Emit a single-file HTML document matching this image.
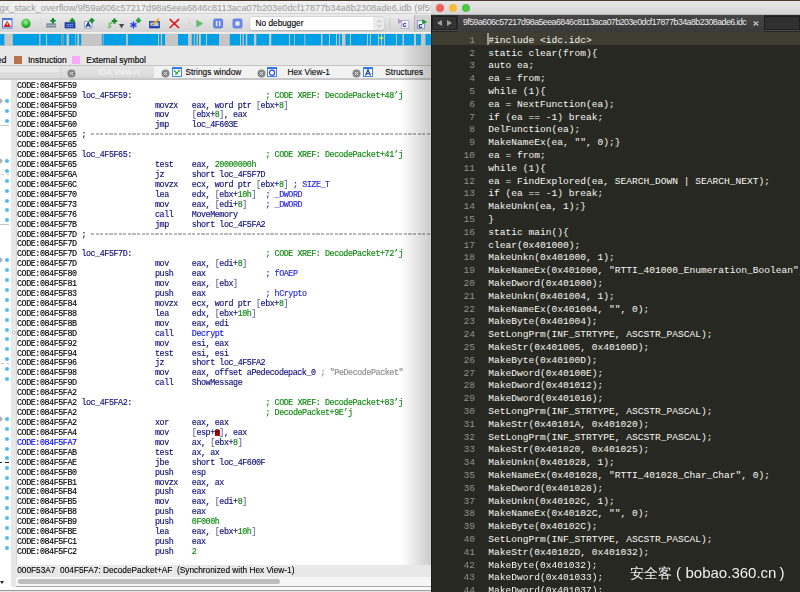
<!DOCTYPE html>
<html><head><meta charset="utf-8">
<style>
*{margin:0;padding:0;box-sizing:border-box}
html,body{width:800px;height:592px;overflow:hidden;background:#e8e8e8}
body{position:relative;font-family:"Liberation Sans",sans-serif}
#ida{position:absolute;left:0;top:0;width:431px;height:592px;background:#e9e9e9;overflow:hidden}
#ida .topline{position:absolute;left:0;top:0;width:431px;height:1px;background:#4a3d30}
#ida .title{position:absolute;left:0;top:1px;width:431px;height:13px;background:#efefef;border-bottom:1px solid #d2d2d2;overflow:hidden}
#ida .title span{position:absolute;left:-0.5px;top:1.2px;font-size:9.2px;color:#9a9a9a;white-space:pre;line-height:12px}
#ida .tb{position:absolute;left:0;top:14px;width:431px;height:18px;background:linear-gradient(#ebebeb,#d4d4d4)}
#ida .tbline{position:absolute;left:0;top:32px;width:431px;height:1px;background:#f2f2f2}
#ida .bandbg{position:absolute;left:0;top:33px;width:431px;height:13px;background:#e6e6e6}
#ida .band{position:absolute;left:0;top:34.3px;width:431px;height:11.3px;background:#c6c6c6;box-shadow:0 -0.6px 0 #f4e4dc,0 0.6px 0 #f4e4dc}
#ida .band i{position:absolute;top:0;height:11.5px}
#ida .legend{position:absolute;left:0;top:46px;width:431px;height:19px;background:#e8e8e8;font-size:8.4px;color:#000;-webkit-text-stroke:0.15px #000}
#ida .legend span{position:absolute;top:8.6px;white-space:pre;line-height:10px}
#ida .legend i{position:absolute;top:10.2px;width:8.2px;height:8.2px}
#ida .tabs{position:absolute;left:0;top:64.5px;width:431px;height:15px;background:#f2f2f2;border-top:1px solid #c4c4c4}
#ida .tabs .bot{position:absolute;left:0;top:12px;width:431px;height:2px;background:#c8c8c8}
#ida .tab{position:absolute;top:0;height:12px;font-size:8.3px;color:#000;white-space:pre;-webkit-text-stroke:0.1px #000}
#ida .tab span{position:absolute;top:1.6px;line-height:10px}
#ida .tab .x{position:absolute;top:3.3px;width:7px;height:7px;border-radius:50%;background:#8e8e8e}
#ida .tab .x:before,#ida .tab .x:after{content:"";position:absolute;left:1.5px;top:3px;width:4px;height:1px;background:#e6e6e6;transform:rotate(45deg)}
#ida .tab .x:after{transform:rotate(-45deg)}
#ida .tab .ic{position:absolute;top:1.5px;width:9.5px;height:10px;border:1px solid #3a7ae0;background:#f4f8ff}
#ida .tdiv{position:absolute;top:1px;width:1px;height:12px;background:#cfcfcf}
#ida .code{position:absolute;left:0;top:79.5px;width:431px;height:486px;background:#fff;overflow:hidden}
#ida .gstrip{position:absolute;left:11px;top:79.5px;width:5.5px;height:508px;background:#e7e7e7;border-right:1px solid #d6d6d6}
#ida .row{will-change:transform;position:absolute;left:0;width:431px;height:9.92px;font-family:"Liberation Mono",monospace;font-size:8.4px;letter-spacing:-0.44px;line-height:9.92px;white-space:pre;-webkit-text-stroke:0.15px currentColor}
#ida .row span{position:absolute;top:0}
#ida .row i{font-style:normal}
#ida .a{color:#000}
#ida .a.cur{color:#0000ff}
#ida .l{color:#10107a}
#ida .m,#ida .o{color:#10107a}
#ida .n{color:#0e880e}
#ida .b{color:#6a6aa8}
#ida .c{color:#0e880e}
#ida .k{color:#2a2ad8}
#ida .f{color:#1010e8}
#ida .dl.blk{background:linear-gradient(90deg,#222 0,#222 2px,transparent 2px,transparent 5px,#222 5px,#222 9px)}
#ida .s{color:#8a8a8a}
#ida .dsh{color:#202020}
#ida .dashline{position:absolute;top:2.3px;width:420px;height:1.3px;background:repeating-linear-gradient(90deg,#bababa 0,#bababa 3.2px,transparent 3.2px,transparent 4.6px)}
#ida .up{font-weight:normal;display:inline-block;width:4.6px;text-align:center}
#ida .cursor{color:#300000;font-style:normal}
#ida .curbox{position:absolute;width:4.8px;height:6.2px;background:#e40000}
#ida .dot{position:absolute;left:5px;width:4px;height:4px;border-radius:50%;background:#4cbcf8}
#ida .arr{position:absolute;left:0;width:0;height:0;border-top:3.5px solid transparent;border-bottom:3.5px solid transparent;border-left:3.5px solid #b0b0b0}
#ida .hl{position:absolute;left:0;width:9px;height:1.3px;background:#c4c4c4}
#ida .dl{position:absolute;left:0;width:9px;height:1.3px;background:linear-gradient(90deg,transparent 0,transparent 1px,#c4c4c4 1px,#c4c4c4 4.5px,transparent 4.5px,transparent 7.5px,#c4c4c4 7.5px,#c4c4c4 9px)}
#ida .shadow{position:absolute;left:401px;top:46px;width:30px;height:546px;background:linear-gradient(90deg,rgba(0,0,0,0),rgba(0,0,0,0.2))}
#ida .status{position:absolute;left:16px;top:565px;width:415px;height:11.5px;background:#e8e8e8;font-size:8.3px;color:#000;white-space:pre;-webkit-text-stroke:0.1px #000}
#ida .status span{position:absolute;left:1.2px;top:-0.2px;line-height:10px}
#ida .sbar{position:absolute;left:16px;top:576.5px;width:415px;height:9.5px;background:#f6f6f6}
#ida .thumb{position:absolute;left:2px;top:2.5px;width:262px;height:5px;border-radius:3px;background:#bdbdbd}
#ida .bl1{position:absolute;left:16px;top:586px;width:415px;height:1px;background:#a8a8a8}
#ida .bl2{position:absolute;left:0;top:587px;width:431px;height:2.5px;background:#fafafa}
#ida .bl3{position:absolute;left:0;top:589.5px;width:431px;height:1px;background:#9c9c9c}
#ida .bl4{position:absolute;left:0;top:590.5px;width:431px;height:2px;background:#e4e4e4}
#ida .gwhite{position:absolute;left:0;top:79.5px;width:11.5px;height:508px;background:#fff}
#ida .tri{position:absolute;left:0;top:581px;width:0;height:0;border-left:2.5px solid transparent;border-right:2.5px solid transparent;border-top:3px solid #222}
/* toolbar icons */
#ida .ico{position:absolute}
#ida .dd{position:absolute;left:250px;top:17px;width:133.5px;height:12.5px;background:linear-gradient(90deg,#fff 0,#fff 123.5px,#ebebeb 123.5px);border-radius:3px;box-shadow:0 0 0 0.5px #c8c8c8,0 0.5px 1px rgba(0,0,0,.2);font-size:8.3px;color:#000;-webkit-text-stroke:0.12px #000}
#ida .dd span{position:absolute;left:5.5px;top:1.2px;line-height:10px}
#ida .pressed{position:absolute;left:414px;top:14.5px;width:17px;height:17.5px;background:linear-gradient(#d6d6d6,#c8c8c8);border-left:1px solid #b4b4b4}
/* sublime */
#st{position:absolute;left:431px;top:0;width:369px;height:592px;background:#272822;overflow:hidden}
#st .topline{position:absolute;left:0;top:0;width:369px;height:1px;background:#4a3d30}
#st .title{position:absolute;left:0;top:1px;width:369px;height:14px;background:linear-gradient(#e6e6e6,#d6d6d6);border-bottom:0.5px solid #b8b8b8}
#st .light{position:absolute;top:2.6px;width:8px;height:8px;border-radius:50%}
#st .tabbar{position:absolute;left:0;top:15px;width:369px;height:17px;background:#2b2b2b;border-bottom:1px solid #262626}
#st .tabline{position:absolute;left:333px;top:29.5px;width:36px;height:1.2px;background:#4a4a4a}
#st .tabline2{position:absolute;left:0;top:29.5px;width:27px;height:1.2px;background:#4a4a4a}
#st .nav{position:absolute;left:0.5px;top:0.5px;width:25.5px;height:14px;background:#333333;border:0.5px solid #222}
#st .nav i{position:absolute;top:3.5px;width:0;height:0;border-top:3px solid transparent;border-bottom:3px solid transparent}
#st .tabx{position:absolute;left:27px;top:0;width:306px;height:17px;background:linear-gradient(#464646,#3a3a3a);border-bottom-right-radius:0;font-size:8.7px;letter-spacing:-0.47px;color:#eeeeee;white-space:pre}
#st .tabx span{position:absolute;left:4.9px;top:2.4px;line-height:10px}
#st .tabx b{position:absolute;left:295.3px;top:3.9px;font-weight:bold;font-size:8.6px;letter-spacing:0;color:#c4c4c4;line-height:10px}
#st .empty{position:absolute;left:333px;top:0.5px;width:36px;height:14px;background:#303030;border:0.5px solid #1e1e1e}
#st .hlrow{position:absolute;left:0;top:32.2px;width:369px;height:12.9px;background:#3e3d32}
#st .leftedge{position:absolute;left:0;top:15px;width:1px;height:592px;background:#1c1c18}
#st .ln{position:absolute;left:0;width:369px;height:12.82px;font-family:"Liberation Mono",monospace;font-size:9.59px;line-height:12.8px;white-space:pre}
#st .num{position:absolute;right:325px;color:#8f908a}
#st .tx{position:absolute;left:57.3px;color:#f8f8f2}
#st .caret{position:absolute;left:56.3px;top:33px;width:1.5px;height:11.5px;background:#9a9a90}
#wm{position:absolute;left:630px;top:563px;font-size:14px;color:#f4f4f4;white-space:pre;text-shadow:0 0 1px rgba(0,0,0,.6)}
#wm span{position:absolute;top:1px;line-height:18px}
</style></head><body>
<div id="ida">
 <div class="topline"></div>
 <div class="title"><span>gx_stack_overflow/9f59a606c57217d98a5eea6846c8113aca07b203e0dcf17877b34a8b2308ade6.idb (9f59a606c57217d98a5eea6846c8113aca07b203e0dcf17877b34a8b2308ade6)</span></div>
 <div class="tb"></div>
 <div class="tbline"></div>
 <div class="pressed"></div><div class="dd"><span>No debugger</span><i class="step"></i></div><svg class="ico" style="left:0;top:14px" width="431" height="18" viewBox="0 14 431 18">
 <!-- 1 window with red triangle -->
 <rect x="2.5" y="18.5" width="9.5" height="9.5" fill="#f4f8ff" stroke="#4a7ad8" stroke-width="1"/>
 <rect x="2.5" y="18.5" width="9.5" height="1.6" fill="#4a7ad8"/>
 <path d="M7.2 20.8 L11 27 L3.4 27 Z" fill="#e01818"/>
 <rect x="6.8" y="22.6" width="0.9" height="2.4" fill="#fff"/>
 <!-- 2 green circle -->
 <defs><radialGradient id="gc" cx="0.45" cy="0.35" r="0.65"><stop offset="0" stop-color="#a8f0a0"/><stop offset="0.55" stop-color="#3cc83c"/><stop offset="1" stop-color="#1a8a1a"/></radialGradient></defs>
 <circle cx="26" cy="23.4" r="4.6" fill="url(#gc)"/>
 <!-- separators -->
 <path d="M41 19 v1 M42 21 v1 M41 23 v1 M42 25 v1" stroke="#c8c8c8" stroke-width="1"/>
 <path d="M189 19 v1 M190 21 v1 M189 23 v1 M190 25 v1" stroke="#c8c8c8" stroke-width="1"/>
 <path d="M390 18 v12" stroke="#b4b4b4" stroke-width="1" stroke-dasharray="1 1"/>
 <!-- 4 data + plus -->
 <rect x="46" y="23" width="10.2" height="5" fill="#a8b8c0"/>
 <path d="M46.5 24.2 h9.2 M46.5 26.6 h9.2" stroke="#506878" stroke-width="1" stroke-dasharray="1.2 0.8"/>
 <path d="M53 18 v5.4 M50.3 20.7 h5.4" stroke="#168a2a" stroke-width="2"/>
 <!-- 5 101 box + plus -->
 <rect x="65" y="22.6" width="10" height="5.4" fill="#2646b8" stroke="#1a2a88" stroke-width="0.6"/>
 <path d="M66.5 24.6 h7 M66.5 26.4 h7" stroke="#a8c0ff" stroke-width="0.9" stroke-dasharray="1.1 0.6"/>
 <path d="M72.3 18 v5.4 M69.6 20.7 h5.4" stroke="#168a2a" stroke-width="2"/>
 <!-- 6 A box + plus -->
 <rect x="84.4" y="21.4" width="7.6" height="6.8" fill="#f4f6fa" stroke="#8898b8" stroke-width="0.8"/>
 <path d="M86 27.2 L88.2 22.8 L90.4 27.2 M86.9 25.6 h2.6" stroke="#1a3a88" stroke-width="1.4" fill="none"/>
 <path d="M91.8 18 v5.2 M89.2 20.6 h5.2" stroke="#168a2a" stroke-width="2"/>
 <!-- 7 green S arrow + plus + dropdown -->
 <path d="M112.5 23.3 C110.5 22.6 107.8 23.4 109.4 24.9 C111 26 111.8 26.8 108 27.4" fill="none" stroke="#5ab84a" stroke-width="1.5" stroke-dasharray="1.6 0.5"/>
 <path d="M114.5 18.3 v5.4 M111.8 21 h5.4" stroke="#1a8a2a" stroke-width="2"/>
 <path d="M119 24 h5.2 l-2.6 4.6 z" fill="#4a4a4a"/>
 <!-- 8 blue asterisk + plus -->
 <path d="M133.5 21.5 v7 M130.5 23.3 l6 3.4 M130.5 26.7 l6 -3.4" stroke="#2a3ae8" stroke-width="1.4"/>
 <path d="M138.5 17.8 v5.2 M135.9 20.4 h5.2" stroke="#1f9a3a" stroke-width="2"/>
 <!-- 9 edit -->
 <rect x="149.5" y="21.5" width="10" height="6.5" fill="#2a4ab8" stroke="#1a2a80" stroke-width="0.6"/>
 <rect x="150.5" y="22.5" width="8" height="3.5" fill="#b8c8f0"/>
 <path d="M152.5 25 L159 18.5" stroke="#f0b020" stroke-width="1.8"/>
 <path d="M152 25.6 L153.2 24.3" stroke="#303030" stroke-width="1"/>
 <!-- 10 red X -->
 <path d="M169.6 19.2 L179 28 M179 19.2 L169.6 28" stroke="#e01a1a" stroke-width="1.7"/>
 <!-- 12 play -->
 <path d="M196.3 19.8 L203.3 23.6 L196.3 27.4 Z" fill="#5cbf6c"/>
 <!-- 13 pause -->
 <rect x="213.6" y="19" width="9" height="9" rx="1.6" fill="#6b8ef0" stroke="#3c5cc8" stroke-width="0.6"/>
 <path d="M216.6 21 v5 M219.6 21 v5" stroke="#eef" stroke-width="1.2"/>
 <!-- 14 stop -->
 <rect x="233" y="19" width="9" height="9" rx="1.6" fill="#6b8ef0" stroke="#3c5cc8" stroke-width="0.6"/>
 <rect x="235.5" y="21.5" width="4" height="4" fill="#eef"/>
 <!-- 17 C icon -->
 <rect x="401.3" y="20.6" width="7.6" height="8" fill="#f0f4ff" stroke="#98a8d0" stroke-width="0.8"/>
 <text x="402.4" y="27.4" font-family="Liberation Sans" font-size="7.2" fill="#2a2a8a" font-weight="bold">c</text>
 <path d="M398 18.6 L402.5 21.3 L398 24 Z" fill="#b88cc8" opacity="0.9"/>
 <!-- 18 pressed C + play -->
 <rect x="417.3" y="20.8" width="7.2" height="7.6" fill="#f4f6ff" stroke="#6a88c8" stroke-width="0.8"/>
 <text x="418.2" y="27.6" font-family="Liberation Sans" font-size="7.6" fill="#0a0a60" font-weight="bold">c</text>
 <path d="M422.2 19.3 L427.2 21.9 L422.2 24.6 Z" fill="#1aa02a"/>
 <!-- stepper -->
 <path d="M377.2 22.4 L379.2 20.4 L381.2 22.4 M377.2 24.8 L379.2 26.8 L381.2 24.8" fill="none" stroke="#a8a8a8" stroke-width="0.9"/>
</svg>

 <div class="bandbg"></div>
 <div class="band"><svg style="position:absolute;left:0;top:0" width="431" height="11.3" viewBox="0 0 431 11.3"><rect x="0" y="0" width="431" height="11.3" fill="#c6c6c6"/><rect x="0.00" y="0" width="4.30" height="11.3" fill="#00a0e6"/><rect x="12.80" y="0" width="26.40" height="11.3" fill="#00a0e6"/><rect x="40.40" y="0" width="5.60" height="11.3" fill="#00a0e6"/><rect x="47.00" y="0" width="14.00" height="11.3" fill="#00a0e6"/><rect x="63.50" y="0" width="3.00" height="11.3" fill="#00a0e6"/><rect x="69.00" y="0" width="6.30" height="11.3" fill="#00a0e6"/><rect x="75.90" y="0" width="1.40" height="11.3" fill="#00a0e6"/><rect x="79.00" y="0" width="2.20" height="11.3" fill="#00a0e6"/><rect x="101.80" y="0" width="1.00" height="11.3" fill="#00a0e6"/><rect x="103.50" y="0" width="22.50" height="11.3" fill="#00a0e6"/><rect x="127.80" y="0" width="30.20" height="11.3" fill="#00a0e6"/><rect x="159.00" y="0" width="1.80" height="11.3" fill="#00a0e6"/><rect x="162.00" y="0" width="3.00" height="11.3" fill="#00a0e6"/><rect x="178.00" y="0" width="10.00" height="11.3" fill="#00a0e6"/><rect x="191.80" y="0" width="2.00" height="11.3" fill="#00a0e6"/><rect x="194.80" y="0" width="1.70" height="11.3" fill="#00a0e6"/><rect x="197.80" y="0" width="1.20" height="11.3" fill="#00a0e6"/><rect x="200.60" y="0" width="5.40" height="11.3" fill="#00a0e6"/><rect x="207.00" y="0" width="12.00" height="11.3" fill="#00a0e6"/><rect x="229.80" y="0" width="10.20" height="11.3" fill="#00a0e6"/><rect x="241.00" y="0" width="1.50" height="11.3" fill="#00a0e6"/><rect x="243.80" y="0" width="2.00" height="11.3" fill="#00a0e6"/><rect x="247.30" y="0" width="6.70" height="11.3" fill="#00a0e6"/><rect x="256.30" y="0" width="12.70" height="11.3" fill="#00a0e6"/><rect x="271.30" y="0" width="17.70" height="11.3" fill="#00a0e6"/><rect x="290.00" y="0" width="4.00" height="11.3" fill="#00a0e6"/><rect x="294.80" y="0" width="9.70" height="11.3" fill="#00a0e6"/><rect x="305.40" y="0" width="15.60" height="11.3" fill="#00a0e6"/><rect x="322.50" y="0" width="6.50" height="11.3" fill="#00a0e6"/><rect x="330.00" y="0" width="6.00" height="11.3" fill="#00a0e6"/><rect x="337.00" y="0" width="2.00" height="11.3" fill="#00a0e6"/><rect x="340.00" y="0" width="2.00" height="11.3" fill="#00a0e6"/><rect x="345.50" y="0" width="4.50" height="11.3" fill="#00a0e6"/><rect x="351.00" y="0" width="16.00" height="11.3" fill="#00a0e6"/><rect x="368.00" y="0" width="2.00" height="11.3" fill="#00a0e6"/><rect x="371.00" y="0" width="7.00" height="11.3" fill="#00a0e6"/><rect x="379.00" y="0" width="2.00" height="11.3" fill="#00a0e6"/><rect x="382.00" y="0" width="2.00" height="11.3" fill="#00a0e6"/><rect x="385.00" y="0" width="11.00" height="11.3" fill="#00a0e6"/><rect x="397.00" y="0" width="5.50" height="11.3" fill="#00a0e6"/><rect x="404.00" y="0" width="10.00" height="11.3" fill="#00a0e6"/><rect x="416.00" y="0" width="5.00" height="11.3" fill="#00a0e6"/><rect x="425.50" y="0" width="5.50" height="11.3" fill="#00a0e6"/><rect x="61.3" y="0" width="2" height="11.3" fill="#3aa0b0"/><rect x="199.2" y="0" width="1.3" height="11.3" fill="#e0c890"/><path d="M381.5 1 L382.3 3.2 L384.3 4 L382.3 4.8 L381.5 7 L380.7 4.8 L378.7 4 L380.7 3.2 Z" fill="#f0f040"/></svg></div>
 <div class="legend"><span style="left:-3px">ed</span><i style="left:13.6px;top:10px;background:#b7744e"></i><span style="left:28px">Instruction</span><i style="left:71.6px;top:10px;background:#f8a8f8"></i><span style="left:86.3px">External symbol</span></div>
 <div class="tabs">
  <div class="bot"></div>
  <div class="tab" style="left:0;width:60px;background:linear-gradient(#e8e8e8 0,#e8e8e8 50%,#dcdcdc 50%,#dcdcdc 100%)"></div>
  <div class="tab" style="left:60px;width:94px;background:linear-gradient(#e6e6e6,#d8d8d8);border-top-left-radius:3px;border-left:1px solid #d0d0d0"><svg class="ico" style="left:6.00px;top:3px" width="9" height="9" viewBox="0 0 9 9"><circle cx="4.5" cy="4.5" r="4" fill="#858585"/><path d="M2.9 2.9 L6.1 6.1 M6.1 2.9 L2.9 6.1" stroke="#e8e8e8" stroke-width="1"/></svg><span style="left:37px;color:#f6f6f6;-webkit-text-stroke:0">IDA View-A</span></div>
  <div class="tab" style="left:154px;width:95px;background:#f2f2f2"><svg class="ico" style="left:7.25px;top:3px" width="9" height="9" viewBox="0 0 9 9"><circle cx="4.5" cy="4.5" r="4" fill="#858585"/><path d="M2.9 2.9 L6.1 6.1 M6.1 2.9 L2.9 6.1" stroke="#e8e8e8" stroke-width="1"/></svg><svg class="ico" style="left:18.00px;top:1.5px" width="10" height="10" viewBox="0 0 10 10"><rect x="0.5" y="0.5" width="9" height="9" fill="#fbfdff" stroke="#3f86ee" stroke-width="1"/><rect x="0.5" y="0.5" width="9" height="1.6" fill="#2f74e6"/><path d="M2 3.5 L4.5 6 L7.5 4 M3 7.5 L6 6.5 M6.5 3 L7.8 4.5" stroke="#3aa83a" stroke-width="1.3" fill="none"/></svg><span style="left:31.5px">Strings window</span></div>
  <i class="tdiv" style="left:249.5px"></i>
  <div class="tab" style="left:250px;width:95px;background:#f2f2f2"><svg class="ico" style="left:6.50px;top:3px" width="9" height="9" viewBox="0 0 9 9"><circle cx="4.5" cy="4.5" r="4" fill="#858585"/><path d="M2.9 2.9 L6.1 6.1 M6.1 2.9 L2.9 6.1" stroke="#e8e8e8" stroke-width="1"/></svg><svg class="ico" style="left:17.25px;top:1.5px" width="10" height="10" viewBox="0 0 10 10"><rect x="0.5" y="0.5" width="9" height="9" fill="#fbfdff" stroke="#3f86ee" stroke-width="1"/><rect x="0.5" y="0.5" width="9" height="1.6" fill="#2f74e6"/><circle cx="5" cy="5.8" r="2.6" fill="none" stroke="#3a3aee" stroke-width="1.2"/></svg><span style="left:37.5px">Hex View-1</span></div>
  <i class="tdiv" style="left:344.8px"></i>
  <div class="tab" style="left:345px;width:86px;background:#f2f2f2"><svg class="ico" style="left:7.00px;top:3px" width="9" height="9" viewBox="0 0 9 9"><circle cx="4.5" cy="4.5" r="4" fill="#858585"/><path d="M2.9 2.9 L6.1 6.1 M6.1 2.9 L2.9 6.1" stroke="#e8e8e8" stroke-width="1"/></svg><svg class="ico" style="left:18.00px;top:1.5px" width="10" height="10" viewBox="0 0 10 10"><rect x="0.5" y="0.5" width="9" height="9" fill="#fbfdff" stroke="#3f86ee" stroke-width="1"/><rect x="0.5" y="0.5" width="9" height="1.6" fill="#2f74e6"/><path d="M2.5 8.6 L5 2.6 L7.5 8.6 M3.5 6.6 h3" stroke="#2a4a8a" stroke-width="1.3" fill="none"/></svg><span style="left:40.3px">Structures</span></div>
 </div>
 <div class="code">
 </div>
 <div class="gwhite"></div>
 <div class="gstrip"></div>
 <i class="dot" style="top:99.34px"></i><i class="dot" style="top:109.26px"></i><i class="dot" style="top:119.18px"></i><i class="dot" style="top:158.86px"></i><i class="dot" style="top:168.78px"></i><i class="dot" style="top:178.70px"></i><i class="dot" style="top:188.62px"></i><i class="dot" style="top:198.54px"></i><i class="dot" style="top:208.46px"></i><i class="dot" style="top:218.38px"></i><i class="dot" style="top:258.06px"></i><i class="dot" style="top:267.98px"></i><i class="dot" style="top:277.90px"></i><i class="dot" style="top:287.82px"></i><i class="dot" style="top:297.74px"></i><i class="dot" style="top:307.66px"></i><i class="dot" style="top:317.58px"></i><i class="dot" style="top:327.50px"></i><i class="dot" style="top:337.42px"></i><i class="dot" style="top:347.34px"></i><i class="dot" style="top:357.26px"></i><i class="dot" style="top:367.18px"></i><i class="dot" style="top:377.10px"></i><i class="dot" style="top:416.78px"></i><i class="dot" style="top:426.70px"></i><i class="dot" style="top:436.62px"></i><i class="dot" style="top:446.54px"></i><i class="dot" style="top:456.46px"></i><i class="dot" style="top:466.38px"></i><i class="dot" style="top:476.30px"></i><i class="dot" style="top:486.22px"></i><i class="dot" style="top:496.14px"></i><i class="dot" style="top:506.06px"></i><i class="dot" style="top:515.98px"></i><i class="dot" style="top:525.90px"></i><i class="dot" style="top:535.82px"></i><i class="dot" style="top:545.74px"></i><i class="arr" style="top:98.24px"></i><i class="arr" style="top:157.76px"></i><i class="arr" style="top:256.96px"></i><i class="arr" style="top:415.68px"></i><i class="hl" style="top:124.98px"></i><i class="hl" style="top:224.18px"></i><i class="dl" style="top:174.08px"></i><i class="dl" style="top:362.56px"></i><i class="dl blk" style="top:461.76px"></i>
 <svg class="ico" style="left:11px;top:329px" width="5" height="7" viewBox="0 0 5 7"><rect x="0" y="0.3" width="5" height="6" fill="#fafafa"/><circle cx="2.8" cy="3.5" r="1.7" fill="none" stroke="#b4b4b4" stroke-width="1"/></svg>
 <div class="row" style="top:81.70px"><span class="a" style="left:17.00px">CODE:084F5F59</span></div>
<div class="row" style="top:91.62px"><span class="a" style="left:17.00px">CODE:084F5F59</span><span class="l" style="left:81.40px">loc_4F5F59:</span><span class="c" style="left:265.40px">; CODE XREF: DecodePacket+48<b class="up">&#8217;</b>j</span></div>
<div class="row" style="top:101.54px"><span class="a" style="left:17.00px">CODE:084F5F59</span><span class="m" style="left:155.00px">movzx</span><span class="o" style="left:191.80px"><i class="o">eax, word ptr </i><i class="b">[</i><i class="o">ebx+</i><i class="n">8</i><i class="b">]</i></span></div>
<div class="row" style="top:111.46px"><span class="a" style="left:17.00px">CODE:084F5F5D</span><span class="m" style="left:155.00px">mov</span><span class="o" style="left:191.80px"><i class="b">[</i><i class="o">ebx+</i><i class="n">8</i><i class="b">]</i><i class="o">, eax</i></span></div>
<div class="row" style="top:121.38px"><span class="a" style="left:17.00px">CODE:084F5F60</span><span class="m" style="left:155.00px">jmp</span><span class="o" style="left:191.80px"><i class="o">loc_4F603E</i></span></div>
<div class="row" style="top:131.30px"><span class="a" style="left:17.00px">CODE:084F5F65</span><span class="dsh" style="left:81.40px">;</span><i class="dashline" style="left:91.20px"></i></div>
<div class="row" style="top:141.22px"><span class="a" style="left:17.00px">CODE:084F5F65</span></div>
<div class="row" style="top:151.14px"><span class="a" style="left:17.00px">CODE:084F5F65</span><span class="l" style="left:81.40px">loc_4F5F65:</span><span class="c" style="left:265.40px">; CODE XREF: DecodePacket+41<b class="up">&#8217;</b>j</span></div>
<div class="row" style="top:161.06px"><span class="a" style="left:17.00px">CODE:084F5F65</span><span class="m" style="left:155.00px">test</span><span class="o" style="left:191.80px"><i class="o">eax, </i><i class="n">20000000h</i></span></div>
<div class="row" style="top:170.98px"><span class="a" style="left:17.00px">CODE:084F5F6A</span><span class="m" style="left:155.00px">jz</span><span class="o" style="left:191.80px"><i class="o">short loc_4F5F7D</i></span></div>
<div class="row" style="top:180.90px"><span class="a" style="left:17.00px">CODE:084F5F6C</span><span class="m" style="left:155.00px">movzx</span><span class="o" style="left:191.80px"><i class="o">ecx, word ptr </i><i class="b">[</i><i class="o">ebx+</i><i class="n">8</i><i class="b">]</i></span><span class="k" style="left:288.40px"> ; SIZE_T</span></div>
<div class="row" style="top:190.82px"><span class="a" style="left:17.00px">CODE:084F5F70</span><span class="m" style="left:155.00px">lea</span><span class="o" style="left:191.80px"><i class="o">edx, </i><i class="b">[</i><i class="o">ebx+</i><i class="n">10h</i><i class="b">]</i></span><span class="k" style="left:265.40px">; _DWORD</span></div>
<div class="row" style="top:200.74px"><span class="a" style="left:17.00px">CODE:084F5F73</span><span class="m" style="left:155.00px">mov</span><span class="o" style="left:191.80px"><i class="o">eax, </i><i class="b">[</i><i class="o">edi+</i><i class="n">8</i><i class="b">]</i></span><span class="k" style="left:265.40px">; _DWORD</span></div>
<div class="row" style="top:210.66px"><span class="a" style="left:17.00px">CODE:084F5F76</span><span class="m" style="left:155.00px">call</span><span class="o" style="left:191.80px"><i class="o">MoveMemory</i></span></div>
<div class="row" style="top:220.58px"><span class="a" style="left:17.00px">CODE:084F5F7B</span><span class="m" style="left:155.00px">jmp</span><span class="o" style="left:191.80px"><i class="o">short loc_4F5FA2</i></span></div>
<div class="row" style="top:230.50px"><span class="a" style="left:17.00px">CODE:084F5F7D</span><span class="dsh" style="left:81.40px">;</span><i class="dashline" style="left:91.20px"></i></div>
<div class="row" style="top:240.42px"><span class="a" style="left:17.00px">CODE:084F5F7D</span></div>
<div class="row" style="top:250.34px"><span class="a" style="left:17.00px">CODE:084F5F7D</span><span class="l" style="left:81.40px">loc_4F5F7D:</span><span class="c" style="left:265.40px">; CODE XREF: DecodePacket+72<b class="up">&#8217;</b>j</span></div>
<div class="row" style="top:260.26px"><span class="a" style="left:17.00px">CODE:084F5F7D</span><span class="m" style="left:155.00px">mov</span><span class="o" style="left:191.80px"><i class="o">eax, </i><i class="b">[</i><i class="o">edi+</i><i class="n">8</i><i class="b">]</i></span></div>
<div class="row" style="top:270.18px"><span class="a" style="left:17.00px">CODE:084F5F80</span><span class="m" style="left:155.00px">push</span><span class="o" style="left:191.80px"><i class="o">eax</i></span><span class="k" style="left:265.40px">; fOAEP</span></div>
<div class="row" style="top:280.10px"><span class="a" style="left:17.00px">CODE:084F5F81</span><span class="m" style="left:155.00px">mov</span><span class="o" style="left:191.80px"><i class="o">eax, </i><i class="b">[</i><i class="o">ebx</i><i class="b">]</i></span></div>
<div class="row" style="top:290.02px"><span class="a" style="left:17.00px">CODE:084F5F83</span><span class="m" style="left:155.00px">push</span><span class="o" style="left:191.80px"><i class="o">eax</i></span><span class="k" style="left:265.40px">; hCrypto</span></div>
<div class="row" style="top:299.94px"><span class="a" style="left:17.00px">CODE:084F5F84</span><span class="m" style="left:155.00px">movzx</span><span class="o" style="left:191.80px"><i class="o">ecx, word ptr </i><i class="b">[</i><i class="o">ebx+</i><i class="n">8</i><i class="b">]</i></span></div>
<div class="row" style="top:309.86px"><span class="a" style="left:17.00px">CODE:084F5F88</span><span class="m" style="left:155.00px">lea</span><span class="o" style="left:191.80px"><i class="o">edx, </i><i class="b">[</i><i class="o">ebx+</i><i class="n">10h</i><i class="b">]</i></span></div>
<div class="row" style="top:319.78px"><span class="a" style="left:17.00px">CODE:084F5F8B</span><span class="m" style="left:155.00px">mov</span><span class="o" style="left:191.80px"><i class="o">eax, edi</i></span></div>
<div class="row" style="top:329.70px"><span class="a" style="left:17.00px">CODE:084F5F8D</span><span class="m" style="left:155.00px">call</span><span class="o" style="left:191.80px"><i class="f">Decrypt</i></span></div>
<div class="row" style="top:339.62px"><span class="a" style="left:17.00px">CODE:084F5F92</span><span class="m" style="left:155.00px">mov</span><span class="o" style="left:191.80px"><i class="o">esi, eax</i></span></div>
<div class="row" style="top:349.54px"><span class="a" style="left:17.00px">CODE:084F5F94</span><span class="m" style="left:155.00px">test</span><span class="o" style="left:191.80px"><i class="o">esi, esi</i></span></div>
<div class="row" style="top:359.46px"><span class="a" style="left:17.00px">CODE:084F5F96</span><span class="m" style="left:155.00px">jz</span><span class="o" style="left:191.80px"><i class="o">short loc_4F5FA2</i></span></div>
<div class="row" style="top:369.38px"><span class="a" style="left:17.00px">CODE:084F5F98</span><span class="m" style="left:155.00px">mov</span><span class="o" style="left:191.80px"><i class="o">eax, offset aPedecodepack_0</i></span><span class="s" style="left:316.00px"> ; &quot;PeDecodePacket&quot;</span></div>
<div class="row" style="top:379.30px"><span class="a" style="left:17.00px">CODE:084F5F9D</span><span class="m" style="left:155.00px">call</span><span class="o" style="left:191.80px"><i class="o">ShowMessage</i></span></div>
<div class="row" style="top:389.22px"><span class="a" style="left:17.00px">CODE:084F5FA2</span></div>
<div class="row" style="top:399.14px"><span class="a" style="left:17.00px">CODE:084F5FA2</span><span class="l" style="left:81.40px">loc_4F5FA2:</span><span class="c" style="left:265.40px">; CODE XREF: DecodePacket+83<b class="up">&#8217;</b>j</span></div>
<div class="row" style="top:409.06px"><span class="a" style="left:17.00px">CODE:084F5FA2</span><span class="c" style="left:265.40px">; DecodePacket+9E<b class="up">&#8217;</b>j</span></div>
<div class="row" style="top:418.98px"><span class="a" style="left:17.00px">CODE:084F5FA2</span><span class="m" style="left:155.00px">xor</span><span class="o" style="left:191.80px"><i class="o">eax, eax</i></span></div>
<i class="curbox" style="left:215.00px;top:430.2px"></i>
<div class="row" style="top:428.90px"><span class="a" style="left:17.00px">CODE:084F5FA4</span><span class="m" style="left:155.00px">mov</span><span class="o" style="left:191.80px"><i class="b">[</i><i class="o">esp+</i><i class="cursor">8</i><i class="b">]</i><i class="o">, eax</i></span></div>
<div class="row" style="top:438.82px"><span class="a cur" style="left:17.00px">CODE:084F5FA7</span><span class="m" style="left:155.00px">mov</span><span class="o" style="left:191.80px"><i class="o">ax, </i><i class="b">[</i><i class="o">ebx+</i><i class="n">8</i><i class="b">]</i></span></div>
<div class="row" style="top:448.74px"><span class="a" style="left:17.00px">CODE:084F5FAB</span><span class="m" style="left:155.00px">test</span><span class="o" style="left:191.80px"><i class="o">ax, ax</i></span></div>
<div class="row" style="top:458.66px"><span class="a" style="left:17.00px">CODE:084F5FAE</span><span class="m" style="left:155.00px">jbe</span><span class="o" style="left:191.80px"><i class="o">short loc_4F600F</i></span></div>
<div class="row" style="top:468.58px"><span class="a" style="left:17.00px">CODE:084F5FB0</span><span class="m" style="left:155.00px">push</span><span class="o" style="left:191.80px"><i class="o">esp</i></span></div>
<div class="row" style="top:478.50px"><span class="a" style="left:17.00px">CODE:084F5FB1</span><span class="m" style="left:155.00px">movzx</span><span class="o" style="left:191.80px"><i class="o">eax, ax</i></span></div>
<div class="row" style="top:488.42px"><span class="a" style="left:17.00px">CODE:084F5FB4</span><span class="m" style="left:155.00px">push</span><span class="o" style="left:191.80px"><i class="o">eax</i></span></div>
<div class="row" style="top:498.34px"><span class="a" style="left:17.00px">CODE:084F5FB5</span><span class="m" style="left:155.00px">mov</span><span class="o" style="left:191.80px"><i class="o">eax, </i><i class="b">[</i><i class="o">edi+</i><i class="n">8</i><i class="b">]</i></span></div>
<div class="row" style="top:508.26px"><span class="a" style="left:17.00px">CODE:084F5FB8</span><span class="m" style="left:155.00px">push</span><span class="o" style="left:191.80px"><i class="o">eax</i></span></div>
<div class="row" style="top:518.18px"><span class="a" style="left:17.00px">CODE:084F5FB9</span><span class="m" style="left:155.00px">push</span><span class="o" style="left:191.80px"><i class="n">0F000h</i></span></div>
<div class="row" style="top:528.10px"><span class="a" style="left:17.00px">CODE:084F5FBE</span><span class="m" style="left:155.00px">lea</span><span class="o" style="left:191.80px"><i class="o">eax, </i><i class="b">[</i><i class="o">ebx+</i><i class="n">10h</i><i class="b">]</i></span></div>
<div class="row" style="top:538.02px"><span class="a" style="left:17.00px">CODE:084F5FC1</span><span class="m" style="left:155.00px">push</span><span class="o" style="left:191.80px"><i class="o">eax</i></span></div>
<div class="row" style="top:547.94px"><span class="a" style="left:17.00px">CODE:084F5FC2</span><span class="m" style="left:155.00px">push</span><span class="o" style="left:191.80px"><i class="n">2</i></span></div>
 <div class="shadow"></div>
 <div class="status"><span>000F53A7  004F5FA7: DecodePacket+AF  (Synchronized with Hex View-1)</span></div>
 <div class="sbar"><i class="thumb"></i></div>
 <div class="bl1"></div><div class="bl2"></div><div class="bl3"></div><div class="bl4"></div>
 <i class="tri"></i>
</div>
<div id="st">
 <div class="topline"></div>
 <div class="title"><i class="light" style="left:5px;background:#f25e57"></i><i class="light" style="left:18px;background:#f6bb3a"></i><i class="light" style="left:31px;background:#4fc543"></i></div>
 <div class="tabbar">
  <div class="nav"><i style="left:4.7px;border-right:5px solid #a0a0a0"></i><i style="left:14.5px;border-left:5px solid #a0a0a0"></i></div>
  <div class="tabx"><span>9f59a606c57217d98a5eea6846c8113aca07b203e0dcf17877b34a8b2308ade6.idc</span><svg style="position:absolute;left:295.3px;top:5.6px" width="6" height="5" viewBox="0 0 6 5"><path d="M0.6 0.5 L5.2 4.5 M5.2 0.5 L0.6 4.5" stroke="#c4c4c4" stroke-width="1.25"/></svg></div>
  <div class="empty"></div>
 </div>
 <div class="tabline"></div><div class="tabline2"></div>
 <div class="hlrow"></div>
 <div class="ln" style="top:34.80px"><span class="num">1</span><span class="tx">#include &lt;idc.idc&gt;</span></div>
<div class="ln" style="top:47.60px"><span class="num">2</span><span class="tx">static clear(from){</span></div>
<div class="ln" style="top:60.40px"><span class="num">3</span><span class="tx">auto ea;</span></div>
<div class="ln" style="top:73.20px"><span class="num">4</span><span class="tx">ea = from;</span></div>
<div class="ln" style="top:86.00px"><span class="num">5</span><span class="tx">while (1){</span></div>
<div class="ln" style="top:98.80px"><span class="num">6</span><span class="tx">ea = NextFunction(ea);</span></div>
<div class="ln" style="top:111.60px"><span class="num">7</span><span class="tx">if (ea == -1) break;</span></div>
<div class="ln" style="top:124.40px"><span class="num">8</span><span class="tx">DelFunction(ea);</span></div>
<div class="ln" style="top:137.20px"><span class="num">9</span><span class="tx">MakeNameEx(ea, &quot;&quot;, 0);}</span></div>
<div class="ln" style="top:150.00px"><span class="num">10</span><span class="tx">ea = from;</span></div>
<div class="ln" style="top:162.80px"><span class="num">11</span><span class="tx">while (1){</span></div>
<div class="ln" style="top:175.60px"><span class="num">12</span><span class="tx">ea = FindExplored(ea, SEARCH_DOWN | SEARCH_NEXT);</span></div>
<div class="ln" style="top:188.40px"><span class="num">13</span><span class="tx">if (ea == -1) break;</span></div>
<div class="ln" style="top:201.20px"><span class="num">14</span><span class="tx">MakeUnkn(ea, 1);}</span></div>
<div class="ln" style="top:214.00px"><span class="num">15</span><span class="tx">}</span></div>
<div class="ln" style="top:226.80px"><span class="num">16</span><span class="tx">static main(){</span></div>
<div class="ln" style="top:239.60px"><span class="num">17</span><span class="tx">clear(0x401000);</span></div>
<div class="ln" style="top:252.40px"><span class="num">18</span><span class="tx">MakeUnkn(0x401000, 1);</span></div>
<div class="ln" style="top:265.20px"><span class="num">19</span><span class="tx">MakeNameEx(0x401000, &quot;RTTI_401000_Enumeration_Boolean&quot;, 0);</span></div>
<div class="ln" style="top:278.00px"><span class="num">20</span><span class="tx">MakeDword(0x401000);</span></div>
<div class="ln" style="top:290.80px"><span class="num">21</span><span class="tx">MakeUnkn(0x401004, 1);</span></div>
<div class="ln" style="top:303.60px"><span class="num">22</span><span class="tx">MakeNameEx(0x401004, &quot;&quot;, 0);</span></div>
<div class="ln" style="top:316.40px"><span class="num">23</span><span class="tx">MakeByte(0x401004);</span></div>
<div class="ln" style="top:329.20px"><span class="num">24</span><span class="tx">SetLongPrm(INF_STRTYPE, ASCSTR_PASCAL);</span></div>
<div class="ln" style="top:342.00px"><span class="num">25</span><span class="tx">MakeStr(0x401005, 0x40100D);</span></div>
<div class="ln" style="top:354.80px"><span class="num">26</span><span class="tx">MakeByte(0x40100D);</span></div>
<div class="ln" style="top:367.60px"><span class="num">27</span><span class="tx">MakeDword(0x40100E);</span></div>
<div class="ln" style="top:380.40px"><span class="num">28</span><span class="tx">MakeDword(0x401012);</span></div>
<div class="ln" style="top:393.20px"><span class="num">29</span><span class="tx">MakeDword(0x401016);</span></div>
<div class="ln" style="top:406.00px"><span class="num">30</span><span class="tx">SetLongPrm(INF_STRTYPE, ASCSTR_PASCAL);</span></div>
<div class="ln" style="top:418.80px"><span class="num">31</span><span class="tx">MakeStr(0x40101A, 0x401020);</span></div>
<div class="ln" style="top:431.60px"><span class="num">32</span><span class="tx">SetLongPrm(INF_STRTYPE, ASCSTR_PASCAL);</span></div>
<div class="ln" style="top:444.40px"><span class="num">33</span><span class="tx">MakeStr(0x401020, 0x401025);</span></div>
<div class="ln" style="top:457.20px"><span class="num">34</span><span class="tx">MakeUnkn(0x401028, 1);</span></div>
<div class="ln" style="top:470.00px"><span class="num">35</span><span class="tx">MakeNameEx(0x401028, &quot;RTTI_401028_Char_Char&quot;, 0);</span></div>
<div class="ln" style="top:482.80px"><span class="num">36</span><span class="tx">MakeDword(0x401028);</span></div>
<div class="ln" style="top:495.60px"><span class="num">37</span><span class="tx">MakeUnkn(0x40102C, 1);</span></div>
<div class="ln" style="top:508.40px"><span class="num">38</span><span class="tx">MakeNameEx(0x40102C, &quot;&quot;, 0);</span></div>
<div class="ln" style="top:521.20px"><span class="num">39</span><span class="tx">MakeByte(0x40102C);</span></div>
<div class="ln" style="top:534.00px"><span class="num">40</span><span class="tx">SetLongPrm(INF_STRTYPE, ASCSTR_PASCAL);</span></div>
<div class="ln" style="top:546.80px"><span class="num">41</span><span class="tx">MakeStr(0x40102D, 0x401032);</span></div>
<div class="ln" style="top:559.60px"><span class="num">42</span><span class="tx">MakeByte(0x401032);</span></div>
<div class="ln" style="top:572.40px"><span class="num">43</span><span class="tx">MakeDword(0x401033);</span></div>
<div class="ln" style="top:585.20px"><span class="num">44</span><span class="tx">MakeDword(0x401037);</span></div>
 <div class="caret"></div>
 <div class="leftedge"></div>
</div>
<div id="wm"><span style="left:0">安全客</span><span style="left:46px;font-size:15px">(</span><span style="left:55.5px;font-size:15px">bobao.360.cn</span><span style="left:149.5px;font-size:15px">)</span></div>
</body></html>
